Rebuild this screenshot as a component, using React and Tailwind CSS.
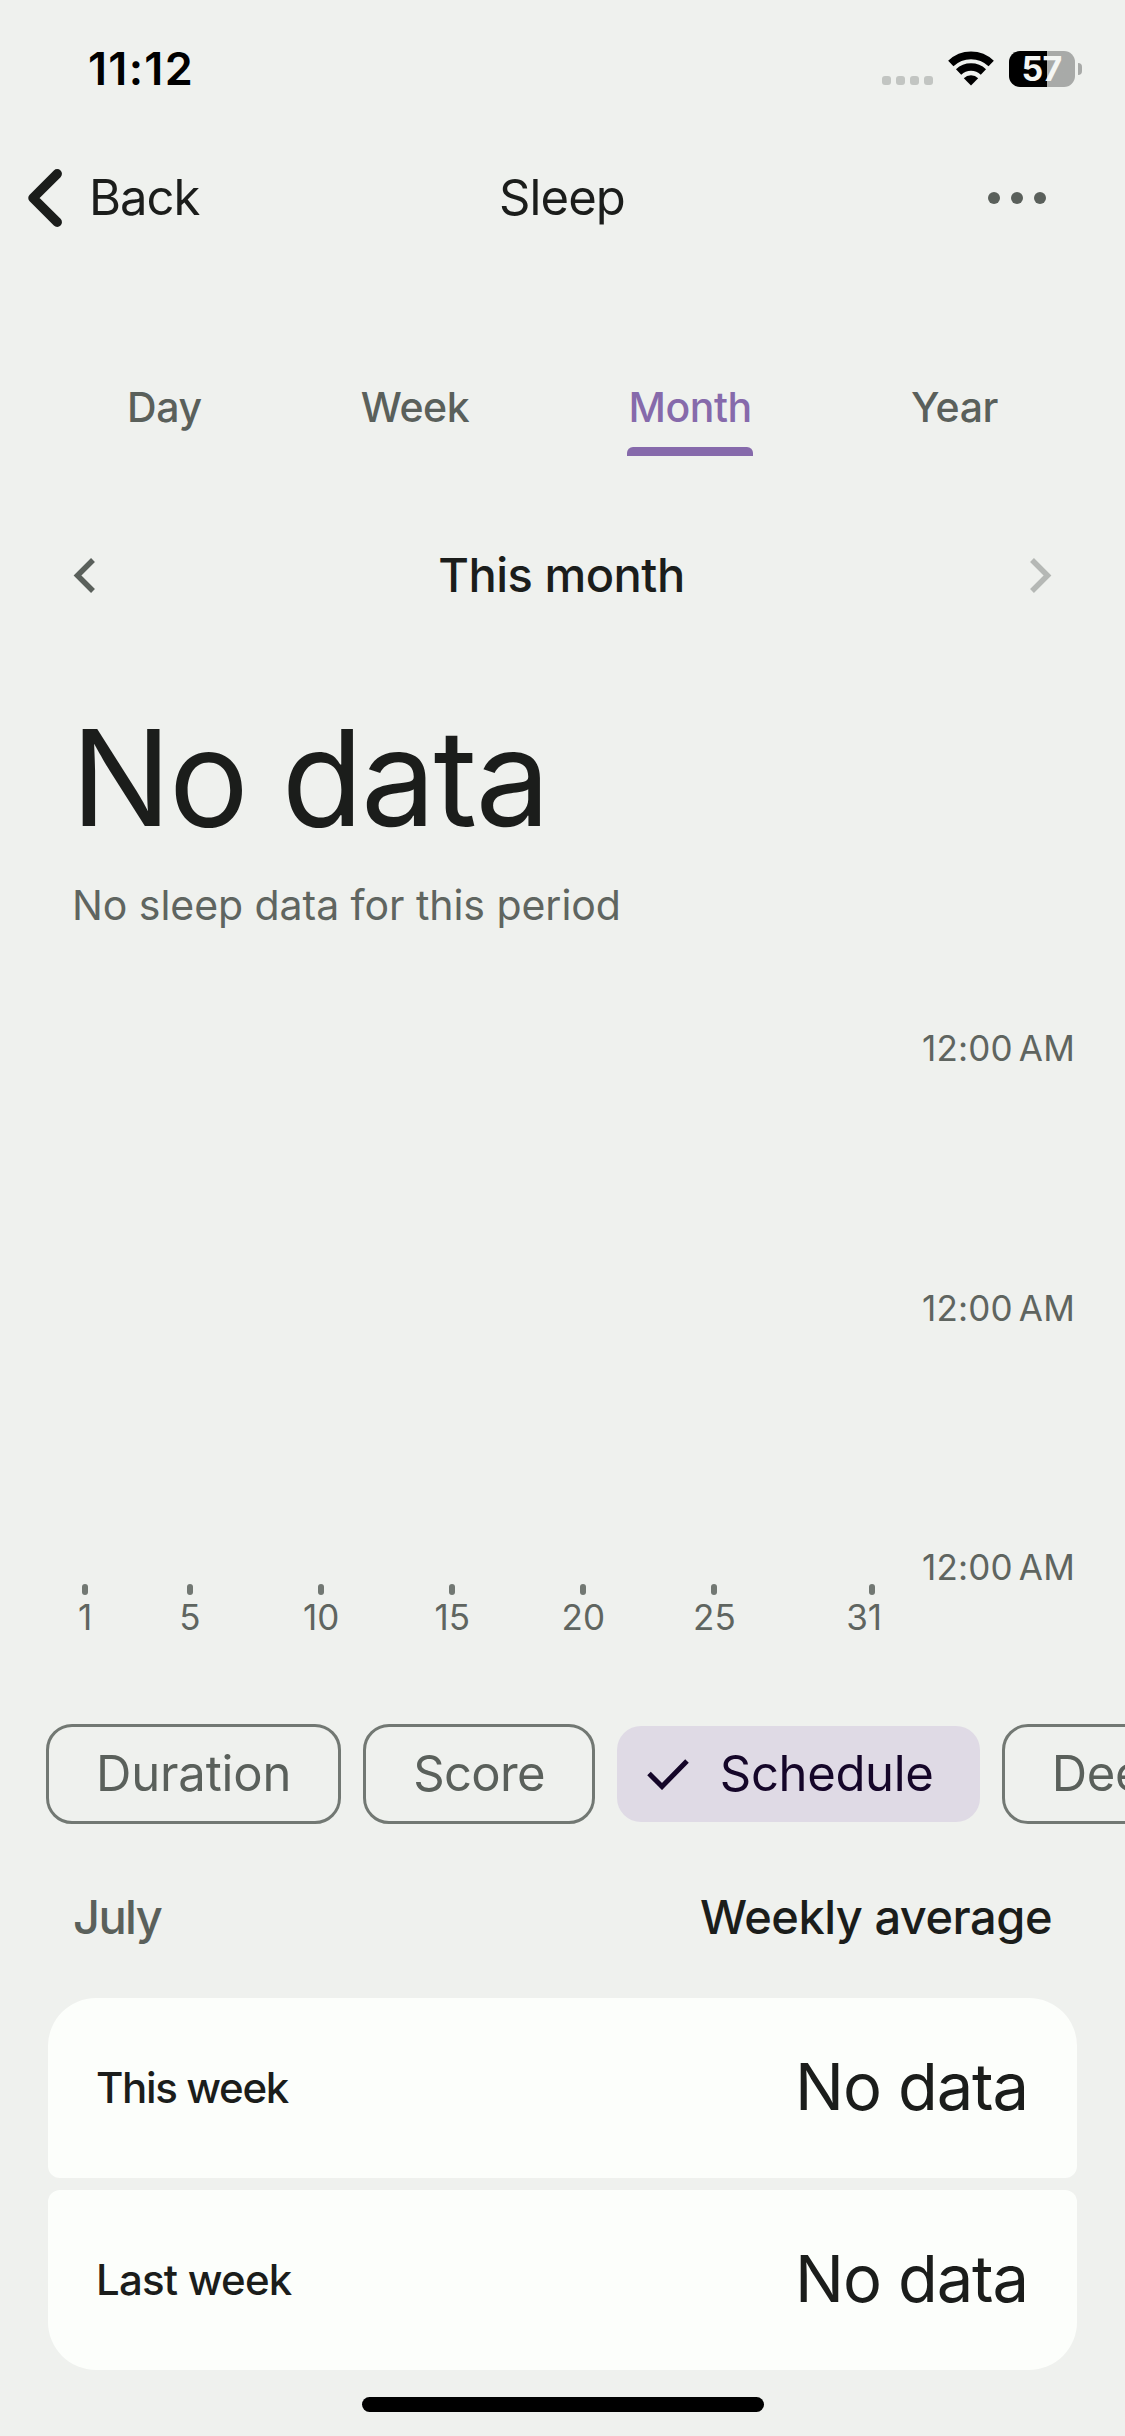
import { useState } from "react"

const tabs = ["Day", "Week", "Month", "Year"]
const chips = [
  { name: "Duration", spacing: "tracking-[-0.15px]" },
  { name: "Score", spacing: "tracking-[-0.7px]" },
  { name: "Schedule", spacing: "tracking-[-0.35px]" },
  { name: "Deep sleep", spacing: "tracking-[-0.35px]" },
]
const timeLabels = ["12:00 AM", "12:00 AM", "12:00 AM"]
const labelledDays = [1, 5, 10, 15, 20, 25, 31]
const days = Array.from({ length: 31 }, (_, i) => i + 1)

const weeks = [
  { name: "This week", value: "No data", spacing: "tracking-[-1.35px]" },
  { name: "Last week", value: "No data", spacing: "tracking-[-0.8px]" },
]

const Chevron = ({ className, strokeWidth, cap = "butt", d, viewBox }) => (
  <svg viewBox={viewBox} className={className} fill="none" stroke="currentColor" strokeWidth={strokeWidth} strokeLinecap={cap} strokeLinejoin={cap === "round" ? "round" : "miter"}>
    <path d={d} />
  </svg>
)

const Wifi = () => (
  <svg viewBox="0 0 46 36" className="ml-[15px] h-9 w-[46px]" fill="none" stroke="#000" strokeWidth="7.6">
    <path d="M2.8 12.6 A29 29 0 0 1 43.2 12.6" />
    <path d="M10.6 21 A18 18 0 0 1 35.4 21" />
    <path d="M23 34.5 L15.8 27.2 A10 10 0 0 1 30.2 27.2 Z" fill="#000" stroke="none" />
  </svg>
)

const StatusBar = () => (
  <div className="flex h-[138px] items-center justify-between pl-[88px] pr-[43px]">
    <span className="text-[45px] font-semibold tracking-[1.3px] text-black">11:12</span>
    <div className="flex items-center">
      <div className="mt-[23px] flex gap-[5px]">
        {[0, 1, 2, 3].map((n) => (
          <span key={n} className="size-[9px] rounded-[3px] bg-[#c2c5c2]" />
        ))}
      </div>
      <Wifi />
      <div className="ml-[15px] flex h-9 w-[66px] items-center justify-center rounded-[11px] bg-linear-to-r from-black from-[58%] to-[#a8aaa8] to-[58%]">
        <span className="pr-px text-[34px] font-bold leading-none tracking-[-0.8px] text-[#f4f6f4]">57</span>
      </div>
      <span className="ml-[3px] h-3 w-1 rounded-r-full bg-[#a8aaa8]" />
    </div>
  </div>
)

const Header = () => (
  <header className="grid h-[120px] grid-cols-3 items-center text-[49px] tracking-[-1px]">
    <button className="flex items-center pl-7">
      <Chevron className="h-[58px] w-[34px]" viewBox="0 0 34 58" strokeWidth="9.5" cap="round" d="M29.2 4.8 L5 29 L29.2 53.2" />
      <span className="ml-[27px]">Back</span>
    </button>
    <h1 className="pr-px text-center tracking-[-0.9px]">Sleep</h1>
    <button className="flex justify-end gap-[11px] pr-[79px]" aria-label="More">
      {[0, 1, 2].map((n) => (
        <span key={n} className="size-3 rounded-full bg-[#5a605b]" />
      ))}
    </button>
  </header>
)

const Tabs = () => {
  const [active, setActive] = useState("Month")

  return (
    <nav className="mt-[110px] flex justify-between px-[126px]">
      {tabs.map((tab) => (
        <button key={tab} onClick={() => setActive(tab)} className={`text-[41px] font-medium tracking-[-0.4px] ${active === tab ? "text-[#866aab]" : "text-[#5a605b]"}`}>
          <span className="block h-[79px] px-px leading-[79px]">{tab}</span>
          <span className={`block h-[9px] rounded-t-[6px] ${active === tab ? "bg-[#866aab]" : ""}`} />
        </button>
      ))}
    </nav>
  )
}

const ScheduleChart = () => (
  <section className="mt-[71px] flex h-[626px] justify-between pl-[72px] pr-[50px] text-[35px] text-[#5f6560]">
    <div className="flex items-end">
      {days.map((day) => (
        <div key={day} className="flex h-[66px] w-[26.22px] flex-col items-center">
          {labelledDays.includes(day) && (
            <>
              <span className="h-[11px] w-1.5 shrink-0 rounded-[3px] bg-[#727873]" />
              <span className={`mt-0.5 leading-10 ${day === 31 ? "mr-[15px]" : ""}`}>{day}</span>
            </>
          )}
        </div>
      ))}
    </div>
    <div className="flex h-[567px] flex-col justify-between">
      {timeLabels.map((label, i) => (
        <span key={i} className="leading-[48px] tracking-[0.2px] [word-spacing:-4px]">{label}</span>
      ))}
    </div>
  </section>
)

const Chips = () => {
  const [selected, setSelected] = useState("Schedule")

  return (
    <div className="mt-[74px] flex h-[100px] items-center gap-[22px] overflow-hidden pl-[46px] text-[49px]">
      {chips.map(({ name, spacing }) =>
        selected === name ? (
          <button key={name} className={`flex h-24 w-[363px] shrink-0 items-center rounded-[24px] bg-[#dfdae5] pl-[30px] text-[#150629] ${spacing}`}>
            <svg viewBox="0 0 42 32" className="h-8 w-[42px]" fill="none" stroke="currentColor" strokeWidth="5">
              <path d="M2 15.5 L15 28.5 L40 3" />
            </svg>
            <span className="ml-[31px]">{name}</span>
          </button>
        ) : (
          <button key={name} onClick={() => setSelected(name)} className={`h-[100px] shrink-0 whitespace-nowrap rounded-[26px] border-[3px] border-[#727873] px-[47px] text-[#5a605b] ${spacing}`}>
            {name}
          </button>
        )
      )}
    </div>
  )
}

export default function App() {
  return (
    <div className="flex h-[2436px] w-[1125px] flex-col overflow-hidden bg-[#eff1ee] font-['Inter',sans-serif] text-[#1b1d1b]">
      <StatusBar />
      <Header />
      <Tabs />

      <div className="mt-[57px] flex h-[124px] items-center justify-between px-[73px]">
        <Chevron className="h-[35px] w-[22px] text-[#5a605b]" viewBox="0 0 22 35" strokeWidth="5.5" d="M20 2 L4.5 17.5 L20 33" />
        <h2 className="pr-0.5 text-[47px] font-medium tracking-[-0.5px]">This month</h2>
        <Chevron className="h-[35px] w-[22px] text-[#b5b8b5]" viewBox="0 0 22 35" strokeWidth="5.5" d="M2 2 L17.5 17.5 L2 33" />
      </div>

      <div className="mt-[61px] px-[71px]">
        <p className="text-[133px] leading-[160px] tracking-[-2.2px]">No data</p>
        <p className="pl-px text-[41px] leading-[95px] tracking-[-0.05px] text-[#5f6560]">No sleep data for this period</p>
      </div>

      <ScheduleChart />
      <Chips />

      <div className="mt-[53px] flex h-20 items-center justify-between px-[73px] text-[47px] font-medium">
        <span className="tracking-[-1.6px] text-[#5a605b]">July</span>
        <span className="tracking-[-0.5px]">Weekly average</span>
      </div>

      <div className="mt-[41px] flex flex-col gap-3 px-12">
        {weeks.map((week) => (
          <div key={week.name} className="flex h-[180px] items-center justify-between rounded-xl bg-[#fcfefb] px-12 pb-0.5 first:rounded-t-[48px] last:rounded-b-[48px]">
            <span className={`text-[42px] font-medium ${week.spacing}`}>{week.name}</span>
            <span className="pr-px text-[65px] tracking-[-1.1px]">{week.value}</span>
          </div>
        ))}
      </div>

      <div className="mx-auto mt-[27px] h-[15px] w-[402px] shrink-0 rounded-full bg-black" />
    </div>
  )
}
